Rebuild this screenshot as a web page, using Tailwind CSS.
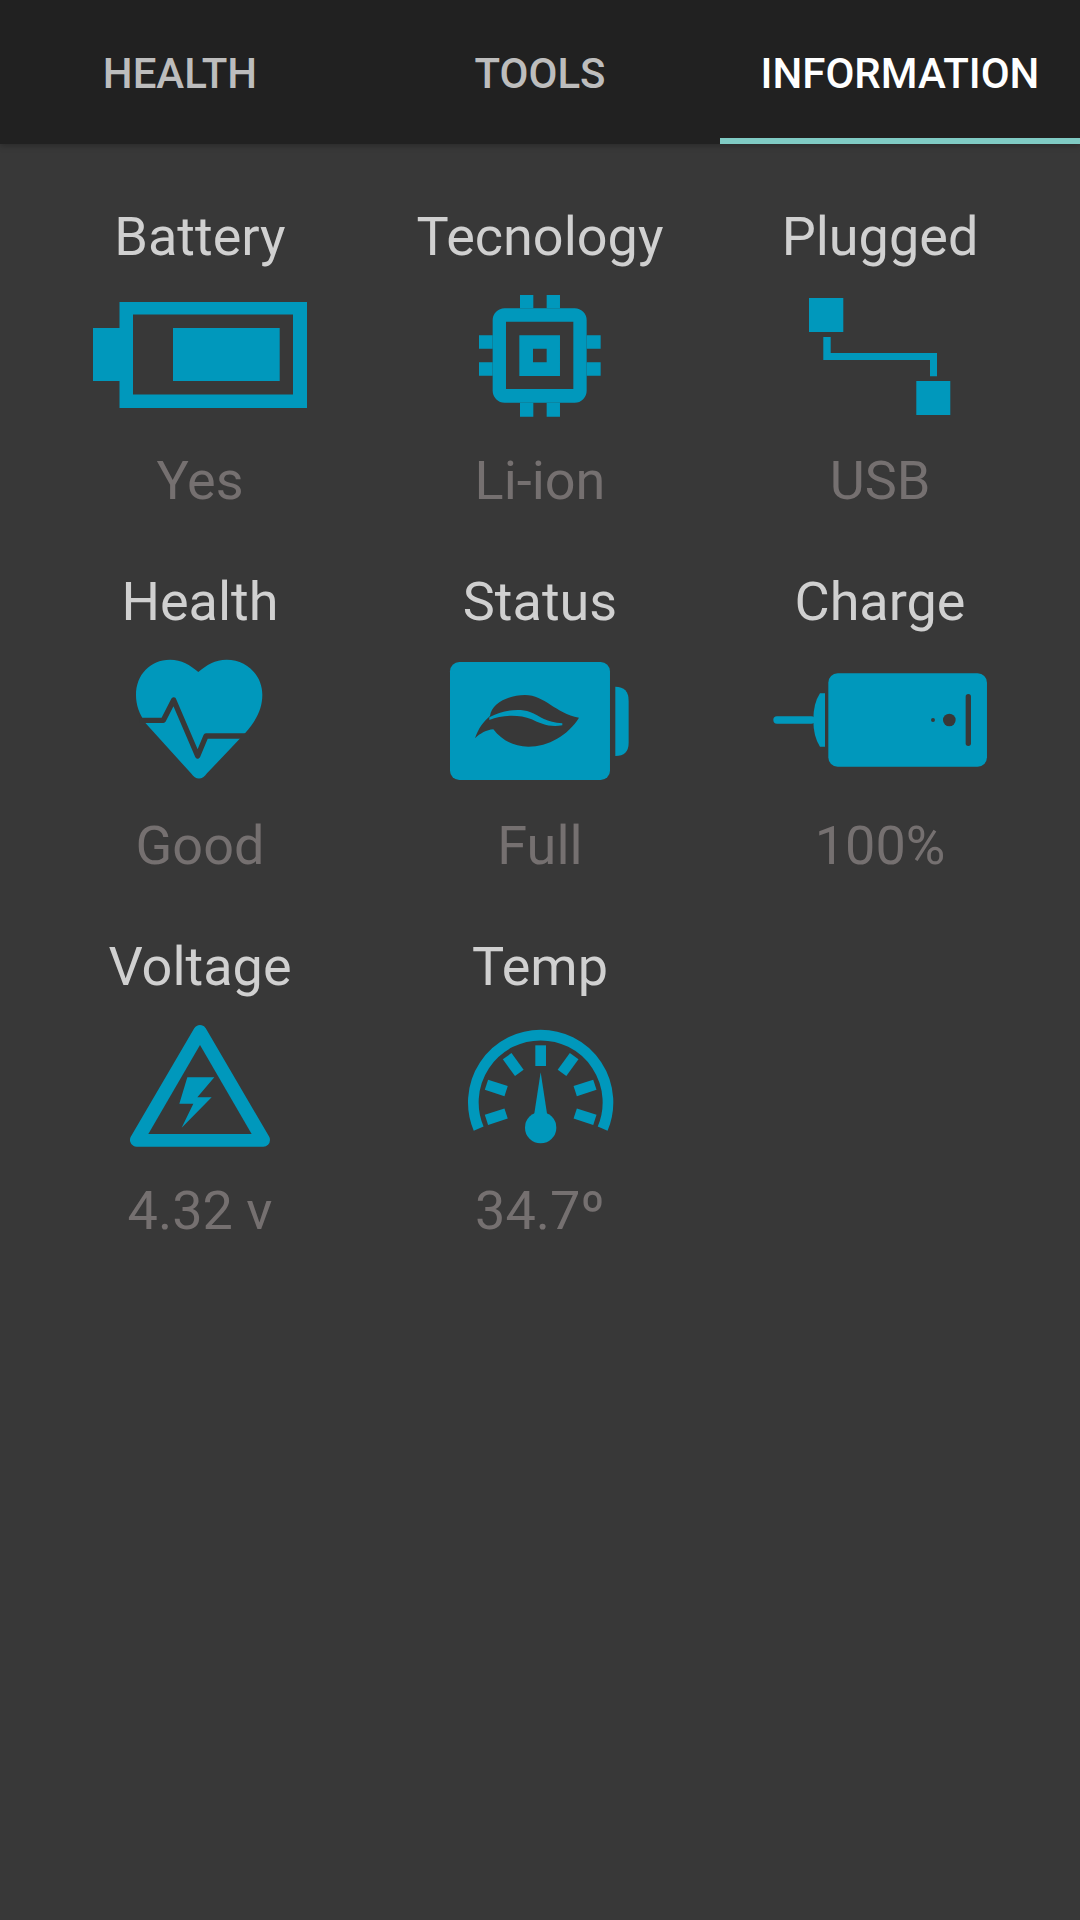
<!DOCTYPE html>
<html lang="en">
<head>
  <meta charset="UTF-8">
  <title>Battery information</title>
  <script src="https://cdn.jsdelivr.net/npm/@tailwindcss/browser@4"></script>
</head>
<body class="bg-[#383838] font-['Roboto',sans-serif] w-[1080px] h-[1920px] overflow-hidden">

  <!-- tabs -->
  <div class="flex h-[144px] bg-[#212121] shadow-[0_2px_6px_rgba(0,0,0,0.25)] text-[42px] font-medium text-[#bdbdbd]">
    <div class="w-[360px] flex items-center justify-center pt-[2px]">HEALTH</div>
    <div class="w-[360px] flex items-center justify-center pt-[2px]">TOOLS</div>
    <div class="w-[360px] flex items-center justify-center pt-[8px] text-white border-b-[6px] border-[#80cbc4]">INFORMATION</div>
  </div>

  <!-- info grid -->
  <div class="grid grid-cols-3 px-[30px] pt-[61px] text-center text-[54px] text-[#d0d0d0]">

    <div class="h-[365px]">
      <div class="h-[63px] leading-[63px]">Battery</div>
      <svg class="block w-[340px] h-[181px]" viewBox="30 268 340 181" fill="#0098bc">
        <path fill-rule="evenodd" d="M93 328H119.500V302H307V408H119.500V381H93ZM133 314.500V394.500H293V314.500ZM173 328H279.700V381H173Z"/>
      </svg>
      <div class="h-[63px] leading-[63px] text-[#757070]">Yes</div>
    </div>

    <div class="h-[365px]">
      <div class="h-[63px] leading-[63px]">Tecnology</div>
      <svg class="block w-[340px] h-[181px]" viewBox="370 268 340 181" fill="#0098bc">
        <g transform="translate(460 280) scale(.3333)">
          <path fill-rule="evenodd" d="M134 85H344A36 36 0 0 1 380 121V332A36 36 0 0 1 344 368H134A36 36 0 0 1 98 332V121A36 36 0 0 1 134 85ZM138 125V327H340V125ZM178 166H300V288H178ZM219 206V247H260V206Z"/>
          <path d="M180 45H220V85H180ZM260 45H300V85H260ZM180 368H220V410H180ZM260 368H300V410H260ZM57 166H98V206H57ZM57 247H98V287H57ZM380 166H422V206H380ZM380 247H422V287H380Z"/>
        </g>
      </svg>
      <div class="h-[63px] leading-[63px] text-[#757070]">Li-ion</div>
    </div>

    <div class="h-[365px]">
      <div class="h-[63px] leading-[63px]">Plugged</div>
      <svg class="block w-[340px] h-[181px]" viewBox="710 268 340 181" fill="#0098bc">
        <path d="M809 298H843.300V332H809ZM916.300 381H950.300V415H916.300ZM823.300 337H830.700V353H937V376.300H930V360H823.300Z"/>
      </svg>
      <div class="h-[63px] leading-[63px] text-[#757070]">USB</div>
    </div>

    <div class="h-[365px]">
      <div class="h-[63px] leading-[63px]">Health</div>
      <svg class="block w-[340px] h-[181px]" viewBox="30 633 340 181" fill="#0098bc">
        <g transform="translate(110 640) scale(.3333)">
          <path d="M265 96C240 75 215 59 180 59C120 59 78 105 78 165C78 195 88 222 107 250L243 400C257 421 277 421 291 400L405 280C440 240 457 205 457 165C457 105 410 59 350 59C315 59 290 75 265 96Z"/>
          <path d="M88 241H160L191 180L263 348L288 288H420" fill="none" stroke="#383838" stroke-width="16" stroke-linejoin="round"/>
        </g>
      </svg>
      <div class="h-[63px] leading-[63px] text-[#757070]">Good</div>
    </div>

    <div class="h-[365px]">
      <div class="h-[63px] leading-[63px]">Status</div>
      <svg class="block w-[340px] h-[181px]" viewBox="370 633 340 181" fill="#0098bc">
        <g transform="translate(430 640) scale(.3333)">
          <rect x="60" y="66" width="480" height="354" rx="28"/>
          <path d="M556 140Q596 140 596 182V308Q596 348 556 348Z"/>
          <path fill="#383838" d="M180 228C185 190 235 165 285 165C345 165 375 220 447 233C415 285 355 320 295 320C250 320 215 300 190 268C170 270 150 280 135 295C145 265 160 245 180 228Z"/>
          <path d="M178 232C215 212 265 203 300 216C330 228 350 248 397 250V256C360 264 330 250 305 238C265 222 215 225 178 240Z"/>
        </g>
      </svg>
      <div class="h-[63px] leading-[63px] text-[#757070]">Full</div>
    </div>

    <div class="h-[365px]">
      <div class="h-[63px] leading-[63px]">Charge</div>
      <svg class="block w-[340px] h-[181px]" viewBox="710 633 340 181" fill="#0098bc">
        <g transform="translate(760 650) scale(.3333)">
          <rect x="205" y="70" width="476" height="280" rx="28"/>
          <path d="M195 130H180Q160 160 160 210Q160 260 180 290H195Z"/>
          <rect x="40" y="199" width="125" height="22" rx="11"/>
          <circle cx="519" cy="210" r="6" fill="#383838"/>
          <circle cx="568" cy="210" r="19" fill="#383838"/>
          <rect x="617" y="132" width="16" height="156" rx="8" fill="#383838"/>
        </g>
      </svg>
      <div class="h-[63px] leading-[63px] text-[#757070]">100%</div>
    </div>

    <div class="h-[365px]">
      <div class="h-[63px] leading-[63px]">Voltage</div>
      <svg class="block w-[340px] h-[181px]" viewBox="30 998 340 181" fill="#0098bc">
        <g transform="translate(110 1010) scale(.3333)">
          <path d="M270 65L80 390H460Z" stroke="#0098bc" stroke-width="40" stroke-linejoin="round"/>
          <path d="M270 105L115 372H425Z" fill="#383838"/>
          <path d="M232 202H313L262 262H305L215 353L250 281H208Z"/>
        </g>
      </svg>
      <div class="h-[63px] leading-[63px] text-[#757070]">4.32 v</div>
    </div>

    <div class="h-[365px]">
      <div class="h-[63px] leading-[63px]">Temp</div>
      <svg class="block w-[340px] h-[181px]" viewBox="370 998 340 181" fill="#0098bc">
        <g transform="translate(450 1010) scale(.3333)">
          <path d="M86 356A202 202 0 1 1 458 356" fill="none" stroke="#0098bc" stroke-width="32"/>
          <rect x="256" y="106" width="32" height="62" transform="rotate(-108 272 277)"/>
          <rect x="256" y="106" width="32" height="62" transform="rotate(-72 272 277)"/>
          <rect x="256" y="106" width="32" height="62" transform="rotate(-36 272 277)"/>
          <rect x="256" y="106" width="32" height="62"/>
          <rect x="256" y="106" width="32" height="62" transform="rotate(36 272 277)"/>
          <rect x="256" y="106" width="32" height="62" transform="rotate(72 272 277)"/>
          <rect x="256" y="106" width="32" height="62" transform="rotate(108 272 277)"/>
          <circle cx="272" cy="353" r="47"/>
          <path d="M272 187L250 330H294Z"/>
        </g>
      </svg>
      <div class="h-[63px] leading-[63px] text-[#757070]">34.7º</div>
    </div>

  </div>
</body>
</html>
